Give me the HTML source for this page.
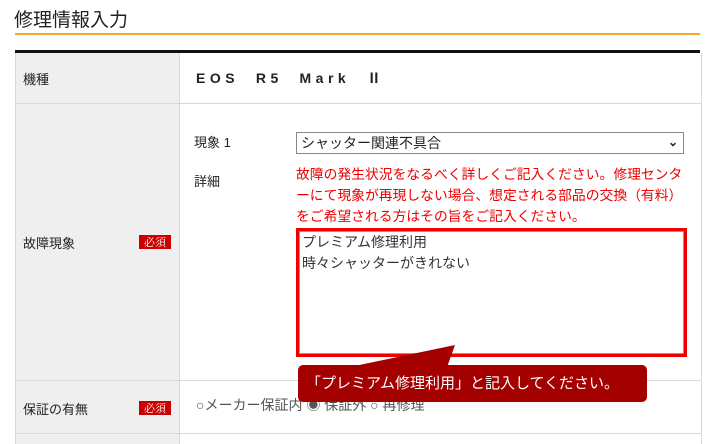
<!DOCTYPE html>
<html><head><meta charset="utf-8"><style>
body{margin:0;width:720px;height:444px;overflow:hidden;background:#fff;font-family:"Liberation Sans","Noto Sans CJK JP",sans-serif;color:#222;position:relative}
.a{position:absolute}
.t{font-size:13px}
.req{position:absolute;background:#c00;color:#fff;font-size:11px;width:32px;height:14px;line-height:14px;text-align:center;font-family:"Noto Serif CJK SC",serif}
</style></head><body>
<div class="a" style="left:14px;top:5px;font-size:19px;color:#222">修理情報入力</div>
<div class="a" style="left:15px;top:33px;width:685px;height:2px;background:#f5a623"></div>
<div class="a" style="left:15px;top:50px;width:685px;height:3px;background:#111"></div>
<div class="a" style="left:16px;top:53px;width:163px;height:391px;background:#efefef"></div>
<div class="a" style="left:15px;top:53px;width:1px;height:391px;background:#d8d8d8"></div>
<div class="a" style="left:179px;top:53px;width:1px;height:391px;background:#d8d8d8"></div>
<div class="a" style="left:701px;top:53px;width:1px;height:391px;background:#d8d8d8"></div>
<div class="a" style="left:15px;top:103px;width:686px;height:1px;background:#d8d8d8"></div>
<div class="a" style="left:15px;top:380px;width:686px;height:1px;background:#d8d8d8"></div>
<div class="a" style="left:15px;top:433px;width:686px;height:1px;background:#d8d8d8"></div>
<div class="a t" style="left:23px;top:69px">機種</div>
<div class="a" style="left:196px;top:68px;font-size:14px;font-weight:bold;letter-spacing:4.5px;color:#222">EOS&nbsp; R5&nbsp; Mark&nbsp; Ⅱ</div>
<div class="a t" style="left:23px;top:233px">故障現象</div>
<div class="req" style="left:139px;top:235px">必須</div>
<div class="a t" style="left:23px;top:399px">保証の有無</div>
<div class="req" style="left:139px;top:401px">必須</div>
<div class="a t" style="left:194px;top:132px">現象 1</div>
<div class="a t" style="left:194px;top:171px">詳細</div>
<div class="a" style="left:296px;top:132px;width:388px;height:22px;border:1px solid #888;box-sizing:border-box;font-size:14px;line-height:20px;padding-left:4px;background:#fff">シャッター関連不具合<span style="position:absolute;right:5px;top:-1px;font-size:12px;font-weight:bold">&#8964;</span></div>
<div class="a" style="left:296px;top:164px;font-size:13.8px;line-height:21px;color:#e00;width:400px;white-space:nowrap">故障の発生状況をなるべく詳しくご記入ください。修理センタ<br>ーにて現象が再現しない場合、想定される部品の交換（有料）<br>をご希望される方はその旨をご記入ください。</div>
<div class="a" style="left:296px;top:228px;width:391px;height:129px;border:3px solid #e00;box-sizing:border-box;background:#fff"><div style="border:1px solid #999;position:absolute;inset:0;font-size:14px;line-height:21px;padding-left:2px;color:#333">プレミアム修理利用<br>時々シャッターがきれない</div></div>
<div class="a" style="left:196px;top:395px;font-size:14px;color:#555">○メーカー保証内 ◉ 保証外 ○ 再修理</div>
<svg class="a" style="left:0;top:0" width="720" height="444"><polygon points="345,368 455,345 446,370" fill="#a50000"/></svg>
<div class="a" style="left:298px;top:365px;width:349px;height:37px;background:#a50000;border-radius:5px;color:#fff;font-size:15px;line-height:37px;padding-left:8px;box-sizing:border-box">「プレミアム修理利用」と記入してください。</div>
</body></html>
